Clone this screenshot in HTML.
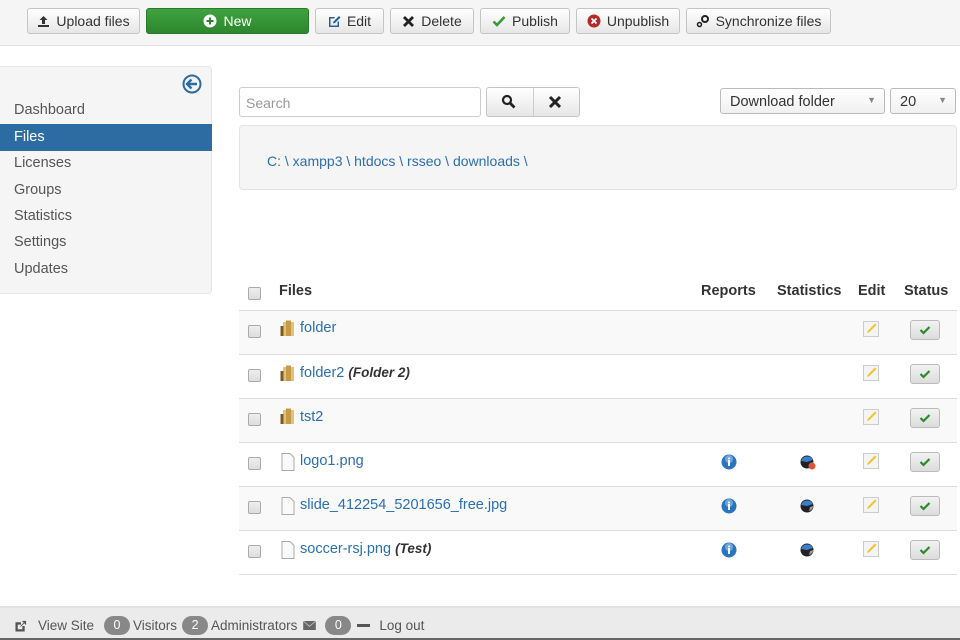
<!DOCTYPE html>
<html><head><meta charset="utf-8"><style>
*{box-sizing:border-box;margin:0;padding:0}
body{width:960px;height:640px;overflow:hidden;background:#fff;font-family:"Liberation Sans",Arial,sans-serif;font-size:14px;color:#333;position:relative}
.abs{position:absolute}
.tb{position:absolute;left:0;top:0;width:960px;height:46px;background:#f5f5f5;border-bottom:1px solid #e3e3e3}
.btn{position:absolute;top:8px;height:26px;border:1px solid #c5c5c5;border-radius:3px;background:linear-gradient(#fff,#e6e6e6);font-size:14px;color:#333;display:flex;align-items:center;justify-content:center;gap:6px}
.btn svg{display:block}
.green{background:linear-gradient(#3fa33f,#2d862d);border-color:#2a7a2a;color:#fff}
.side{position:absolute;left:0;top:66px;width:212px;height:228px;background:#f5f5f5;border:1px solid #e6e6e6;border-left:0;border-radius:0 4px 4px 0}
.side div{position:absolute;left:14px;font-size:14.5px;color:#555}
.sel{left:0!important;width:212px;height:27px;background:#2d6ca2;color:#fff!important;padding-left:14px;line-height:27px}
.a{color:#2a6fb0}
.row{position:absolute;left:239px;width:718px;height:44px;border-top:1px solid #ddd}
.cb{position:absolute;left:9px;width:13px;height:13px;border:1px solid #aaa;background:linear-gradient(#eee,#ddd);border-radius:2px}
.nm{position:absolute;left:61px;font-size:14.5px}
.ic{position:absolute}
.st{position:absolute;left:671px;width:30px;height:20px;border:1px solid #bbb;border-radius:3px;background:linear-gradient(#f2f2f2,#dcdcdc)}
.bd{background:#888;color:#fff;border-radius:10px;width:26px;height:19px;display:inline-block;text-align:center;line-height:19px;font-size:12.5px}
</style></head><body>
<div class="tb"></div>
<div class="btn" style="left:27px;width:113px"><svg width="13" height="13" viewBox="0 0 13 13"><path d="M6.5 1 L2.5 5 H5 V9 H8 V5 H10.5Z M1 10 H12 V12 H1Z" fill="#333"/></svg>Upload files</div>
<div class="btn green" style="left:146px;width:163px"><svg width="14" height="14" viewBox="0 0 14 14"><circle cx="7" cy="7" r="6.5" fill="#fff"/><path d="M7 3.5V10.5M3.5 7H10.5" stroke="#2d862d" stroke-width="2"/></svg>New</div>
<div class="btn" style="left:315px;width:69px"><svg width="13" height="13" viewBox="0 0 13 13"><path d="M1 2H7L6 3.5H2.5V10.5H9.5V7L11 6V12H1Z" fill="#2d5f9a"/><path d="M5 8.5L5.5 6.5L11 1L12.5 2.5L7 8Z" fill="#2d5f9a"/></svg>Edit</div>
<div class="btn" style="left:390px;width:84px"><svg width="13" height="13" viewBox="0 0 13 13"><path d="M2 2L11 11M11 2L2 11" stroke="#222" stroke-width="2.8"/></svg>Delete</div>
<div class="btn" style="left:480px;width:90px"><svg width="14" height="12" viewBox="0 0 14 12"><path d="M1.5 6.5L5 10L12.5 2" stroke="#3a9a2f" stroke-width="2.6" fill="none"/></svg>Publish</div>
<div class="btn" style="left:576px;width:104px"><svg width="14" height="14" viewBox="0 0 14 14"><circle cx="7" cy="7" r="6.5" fill="#b32b2b"/><path d="M4.5 4.5L9.5 9.5M9.5 4.5L4.5 9.5" stroke="#fff" stroke-width="1.8"/></svg>Unpublish</div>
<div class="btn" style="left:686px;width:145px"><svg width="14" height="14" viewBox="0 0 14 14"><circle cx="9" cy="5" r="3" fill="none" stroke="#222" stroke-width="2"/><circle cx="3.5" cy="10.5" r="2" fill="none" stroke="#222" stroke-width="1.5"/></svg>Synchronize files</div>

<div class="side">
<svg class="abs" style="left:182px;top:7px" width="20" height="20" viewBox="0 0 20 20"><circle cx="10" cy="10" r="8.5" fill="none" stroke="#2d6ca2" stroke-width="2"/><path d="M5 10H15M9.5 5.5L5 10L9.5 14.5" fill="none" stroke="#2d6ca2" stroke-width="2.4"/></svg>
<div style="top:35px">Dashboard</div>
<div class="sel" style="top:57px">Files</div>
<div style="top:88px">Licenses</div>
<div style="top:115px">Groups</div>
<div style="top:141px">Statistics</div>
<div style="top:167px">Settings</div>
<div style="top:194px">Updates</div>
</div>

<div class="abs" style="left:239px;top:87px;width:242px;height:30px;border:1px solid #ccc;border-radius:3px;padding:7px 6px;color:#999;font-size:14px">Search</div>
<div class="abs" style="left:486px;top:87px;width:94px;height:30px;border:1px solid #c5c5c5;border-radius:3px;background:linear-gradient(#fff,#e6e6e6)"></div>
<div class="abs" style="left:533px;top:88px;width:1px;height:28px;background:#ccc"></div>
<svg class="abs" style="left:501px;top:94px" width="15" height="15" viewBox="0 0 15 15"><circle cx="6" cy="6" r="4" fill="none" stroke="#222" stroke-width="2.2"/><path d="M9 9L13.5 13.5" stroke="#222" stroke-width="2.8"/></svg>
<svg class="abs" style="left:548px;top:95px" width="14" height="14" viewBox="0 0 14 14"><path d="M2 2L12 12M12 2L2 12" stroke="#222" stroke-width="3"/></svg>
<div class="abs" style="left:720px;top:88px;width:165px;height:26px;border:1px solid #bbb;border-radius:3px;background:linear-gradient(#fff,#f0f0f0);padding:5px 9px;font-size:14.5px">Download folder<span class="abs" style="right:8px;top:6px;font-size:9px;color:#888">▼</span></div>
<div class="abs" style="left:890px;top:88px;width:66px;height:26px;border:1px solid #bbb;border-radius:3px;background:linear-gradient(#fff,#f0f0f0);padding:5px 9px;font-size:14.5px">20<span class="abs" style="right:8px;top:6px;font-size:9px;color:#888">▼</span></div>
<div class="abs" style="left:239px;top:125px;width:718px;height:65px;background:#f5f5f5;border:1px solid #e3e3e3;border-radius:4px;padding:27px 0 0 27px;font-size:14px" ><span class="a">C: \ xampp3 \ htdocs \ rsseo \ downloads \</span></div>

<div class="cb" style="left:248px;top:287px"></div>
<div class="abs" style="left:279px;top:283px;font-weight:bold;font-size:14.5px">Files</div>
<div class="abs" style="left:701px;top:283px;font-weight:bold;font-size:14.5px">Reports</div>
<div class="abs" style="left:777px;top:283px;font-weight:bold;font-size:14.5px">Statistics</div>
<div class="abs" style="left:858px;top:283px;font-weight:bold;font-size:14.5px">Edit</div>
<div class="abs" style="left:904px;top:283px;font-weight:bold;font-size:14.5px">Status</div>

<div class="row" style="top:310px;background:#f9f9f9"></div>
<div class="row" style="top:354px"></div>
<div class="row" style="top:398px;background:#f9f9f9"></div>
<div class="row" style="top:442px"></div>
<div class="row" style="top:486px;background:#f9f9f9"></div>
<div class="row" style="top:530px"></div>
<div class="row" style="top:574px;height:1px"></div>

<svg width="0" height="0" style="position:absolute"><defs>
<g id="fold"><rect x="3" y="2" width="11" height="14" fill="#e2c17a"/><rect x="6" y="0.5" width="5" height="15.5" fill="#c79a4a"/><rect x="0.5" y="6" width="3" height="10" fill="#7a5a22"/></g>
<g id="file"><path d="M1 0.5H9L13 4.5V17.5H1Z" fill="#fafafa" stroke="#aaa"/></g>
<g id="pen"><rect x="0.5" y="0.5" width="15" height="15" fill="#f4f4f4" stroke="#ccc"/><path d="M4 12L5 9.5L12 2.5L13.5 4L6.5 11Z" fill="#f3c52a"/></g>
<g id="info"><circle cx="8" cy="8" r="7.5" fill="#2a74c0"/><circle cx="8" cy="5" r="4" fill="#9ec8f0" opacity=".6"/><rect x="7" y="6" width="2" height="6" fill="#fff"/><circle cx="8" cy="4.5" r="1" fill="#fff"/></g>
<g id="stat"><circle cx="7" cy="7" r="6.5" fill="#222"/><path d="M1 6A6.5 6.5 0 0 1 13 5L7 7Z" fill="#3a7ed0"/><path d="M9 12A6.5 6.5 0 0 0 13.5 7L10 8Z" fill="#999"/></g>
</defs></svg>

<div class="cb" style="left:248px;top:325px"></div>
<svg class="ic" style="left:280px;top:320px" width="15" height="17"><use href="#fold"/></svg>
<div class="nm a" style="left:300px;top:320px">folder</div>

<div class="cb" style="left:248px;top:369px"></div>
<svg class="ic" style="left:280px;top:365px" width="15" height="17"><use href="#fold"/></svg>
<div class="nm" style="left:300px;top:365px"><span class="a">folder2</span> <b><i style="font-size:13.5px">(Folder 2)</i></b></div>

<div class="cb" style="left:248px;top:413px"></div>
<svg class="ic" style="left:280px;top:408px" width="15" height="17"><use href="#fold"/></svg>
<div class="nm a" style="left:300px;top:409px">tst2</div>

<div class="cb" style="left:248px;top:457px"></div>
<svg class="ic" style="left:281px;top:453px" width="14" height="19"><use href="#file"/></svg>
<div class="nm a" style="left:300px;top:453px">logo1.png</div>

<div class="cb" style="left:248px;top:501px"></div>
<svg class="ic" style="left:281px;top:497px" width="14" height="19"><use href="#file"/></svg>
<div class="nm a" style="left:300px;top:497px">slide_412254_5201656_free.jpg</div>

<div class="cb" style="left:248px;top:545px"></div>
<svg class="ic" style="left:281px;top:541px" width="14" height="19"><use href="#file"/></svg>
<div class="nm" style="left:300px;top:541px"><span class="a">soccer-rsj.png</span> <b><i style="font-size:13.5px">(Test)</i></b></div>

<svg class="ic" style="left:863px;top:321px" width="16" height="16"><use href="#pen"/></svg>
<svg class="ic" style="left:863px;top:365px" width="16" height="16"><use href="#pen"/></svg>
<svg class="ic" style="left:863px;top:409px" width="16" height="16"><use href="#pen"/></svg>
<svg class="ic" style="left:863px;top:453px" width="16" height="16"><use href="#pen"/></svg>
<svg class="ic" style="left:863px;top:497px" width="16" height="16"><use href="#pen"/></svg>
<svg class="ic" style="left:863px;top:541px" width="16" height="16"><use href="#pen"/></svg>

<div class="st" style="left:910px;top:320px"></div>
<div class="st" style="left:910px;top:364px"></div>
<div class="st" style="left:910px;top:408px"></div>
<div class="st" style="left:910px;top:452px"></div>
<div class="st" style="left:910px;top:496px"></div>
<div class="st" style="left:910px;top:540px"></div>
<svg class="ic" style="left:919px;top:325px" width="12" height="10"><path d="M1.5 5L4.5 8L10.5 2" stroke="#2a8a2a" stroke-width="2.2" fill="none"/></svg>
<svg class="ic" style="left:919px;top:369px" width="12" height="10"><path d="M1.5 5L4.5 8L10.5 2" stroke="#2a8a2a" stroke-width="2.2" fill="none"/></svg>
<svg class="ic" style="left:919px;top:413px" width="12" height="10"><path d="M1.5 5L4.5 8L10.5 2" stroke="#2a8a2a" stroke-width="2.2" fill="none"/></svg>
<svg class="ic" style="left:919px;top:457px" width="12" height="10"><path d="M1.5 5L4.5 8L10.5 2" stroke="#2a8a2a" stroke-width="2.2" fill="none"/></svg>
<svg class="ic" style="left:919px;top:501px" width="12" height="10"><path d="M1.5 5L4.5 8L10.5 2" stroke="#2a8a2a" stroke-width="2.2" fill="none"/></svg>
<svg class="ic" style="left:919px;top:545px" width="12" height="10"><path d="M1.5 5L4.5 8L10.5 2" stroke="#2a8a2a" stroke-width="2.2" fill="none"/></svg>

<svg class="ic" style="left:721px;top:454px" width="16" height="16"><use href="#info"/></svg>
<svg class="ic" style="left:721px;top:498px" width="16" height="16"><use href="#info"/></svg>
<svg class="ic" style="left:721px;top:542px" width="16" height="16"><use href="#info"/></svg>
<svg class="ic" style="left:800px;top:455px" width="16" height="16"><use href="#stat"/><circle cx="12" cy="11" r="3.5" fill="#e0553a"/></svg>
<svg class="ic" style="left:800px;top:499px" width="16" height="16"><use href="#stat"/></svg>
<svg class="ic" style="left:800px;top:543px" width="16" height="16"><use href="#stat"/></svg>

<div class="abs" style="left:0;top:606px;width:960px;height:34px;background:#ebebeb;border-top:2px solid #e2e2e2"></div>
<div class="abs" style="left:0;top:638px;width:960px;height:2px;background:#666"></div>
<div class="abs" style="left:15px;top:616px;height:19px;display:flex;align-items:center;font-size:13.5px;color:#555;white-space:nowrap">
<svg width="12" height="12" viewBox="0 0 13 13"><path d="M1 3H6V4.5H2.5V10.5H8.5V7H10V12H1Z M6 7L11 2M8 1.5H11.5V5" fill="#555" stroke="#555" stroke-width="1"/></svg>
<span style="margin-left:11px">View Site</span>
<span class="bd" style="margin-left:10px">0</span>
<span style="margin-left:3px">Visitors</span>
<span class="bd" style="margin-left:5px">2</span>
<span style="margin-left:3px">Administrators</span>
<svg style="margin-left:6px" width="13" height="9" viewBox="0 0 14 10"><rect width="14" height="10" fill="#666"/><path d="M0 0L7 6L14 0" stroke="#bbb" fill="none"/></svg>
<span class="bd" style="margin-left:9px">0</span>
<span style="margin-left:6px;display:inline-block;width:13px;height:3px;background:#555"></span>
<span style="margin-left:9px">Log out</span>
</div>
</body></html>
